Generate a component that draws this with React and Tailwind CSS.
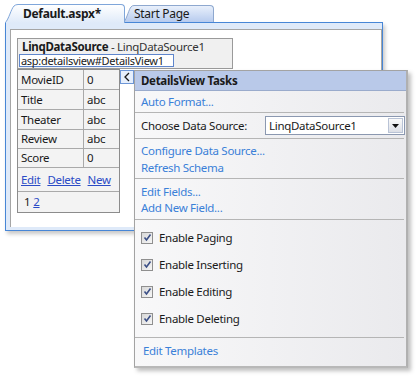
import React from 'react';

const Tab = ({ active, label }) => {
  const id = active ? 'tabA' : 'tabB';
  const h = active ? 19 : 17;
  const top = active ? '#ffffff' : '#e9f0fb';
  const bottom = active ? '#dfeaf9' : '#b7cbee';
  const stroke = active ? '#7fa6da' : '#8ea8cf';
  return (
    <div className={active ? 'flex items-end relative z-10 mb-[-1px]' : 'flex items-end ml-[-1px]'}>
      <svg width={active ? 13 : 10} height={h} viewBox={`0 0 ${active ? 13 : 10} ${h}`} className="block">
        <defs>
          <linearGradient id={id} x1="0" y1="0" x2="0" y2="1">
            <stop offset="0" stopColor={top} />
            <stop offset="1" stopColor={bottom} />
          </linearGradient>
        </defs>
        {active ? (
          <>
            <path d="M0,19 C4,15 6,5 9,2 Q10.5,0.5 13,0.5 L13,19 Z" fill={`url(#${id})`} />
            <path d="M0,19 C4,15 6,5 9,2 Q10.5,0.5 13,0.5" fill="none" stroke={stroke} />
          </>
        ) : (
          <>
            <path d="M0,17 C3,13 5,4 7,2 Q8,0.5 10,0.5 L10,17 Z" fill={`url(#${id})`} />
            <path d="M0,17 C3,13 5,4 7,2 Q8,0.5 10,0.5" fill="none" stroke={stroke} />
          </>
        )}
      </svg>
      <div
        className={
          active
            ? 'h-[19px] w-[107px] border-t border-r border-[#7fa6da] rounded-tr-[4px] bg-linear-to-b from-white to-[#dfeaf9] pl-[5px] text-[12px] font-bold leading-[18px] text-[#1a1a1a]'
            : 'h-[17px] w-[80px] border-t border-r border-[#8ea8cf] rounded-tr-[4px] bg-linear-to-b from-[#e9f0fb] to-[#b7cbee] text-[12px] leading-[16px] text-[#1a1a1a]'
        }
      >
        {label}
      </div>
    </div>
  );
};

const fields = [
  ['MovieID', '0', 'h-[20px]'],
  ['Title', 'abc', 'h-[20px]'],
  ['Theater', 'abc', 'h-[20px]'],
  ['Review', 'abc', 'h-[19px]'],
  ['Score', '0', 'h-[19px]'],
];

const Check = () => (
  <span className="flex h-[12px] w-[12px] items-center justify-center border border-[#8f8f8f] bg-linear-to-br from-[#d8d8d8] to-[#f6f6f6]">
    <svg width="9" height="9" viewBox="0 0 9 9">
      <path d="M1.5,4.5 L3.5,7 L7.5,1.5" fill="none" stroke="#3b4f86" strokeWidth="1.6" />
    </svg>
  </span>
);

const Sep = () => <div className="h-px bg-[#b5b5b5] mr-[2px]" />;

const linkCls = 'text-[#3a80d8]';

export default function App() {
  const options = ['Enable Paging', 'Enable Inserting', 'Enable Editing', 'Enable Deleting'];
  return (
    <div className="relative w-[417px] h-[377px] overflow-hidden bg-white font-['Noto_Sans',sans-serif] tracking-[-0.3px] text-[#1a1a1a]">
      <div className="flex items-end h-[22px] pl-[5px]">
        <Tab active label="Default.aspx*" />
        <Tab label="Start Page" />
      </div>

      <div className="ml-[5px] w-[378px] h-[209px] border border-[#4786d6] bg-[#dfeaf9] pt-[6px] pl-[4px] pb-[3px] shadow-[2px_3px_4px_rgba(0,0,0,0.22)]">
        <div className="h-full bg-white border-t border-l border-r border-[#a5a5a5] pl-[6px] pt-[8px]">
          <div className="w-[216px] border border-[#9a9a9a] bg-[#f0f0f0] pl-[1px] pb-[1px]">
            <div className="ml-[3px] text-[11.5px] leading-[15px]">
              <span className="font-bold">LinqDataSource</span>
              <span className="text-[#333]"> - LinqDataSource1</span>
            </div>
            <div className="w-fit min-w-[155px] h-[13px] border border-[#5f86cc] bg-white pl-[1px] pr-[2px] text-[11px] leading-[11px] whitespace-nowrap">
              asp:detailsview#DetailsView1
            </div>
          </div>

          <div className="flex items-start">
            <div className="w-[103px] border border-[#8c8c8c] bg-[#f3f3f3] text-[11.5px]">
              {fields.map(([k, v, h]) => (
                <div key={k} className={`flex ${h} border-b border-[#a9a9a9] items-center`}>
                  <div className="w-[66px] h-full border-r border-[#a9a9a9] pl-[3px] flex items-center">{k}</div>
                  <div className="pl-[3px]">{v}</div>
                </div>
              ))}
              <div className="flex h-[24px] items-center gap-[7px] pl-[3px] border-b border-[#a9a9a9] text-[#2b4bc6]">
                <span className="underline">Edit</span>
                <span className="underline">Delete</span>
                <span className="underline">New</span>
              </div>
              <div className="flex h-[20px] items-center gap-[3px] pl-[6px]">
                <span>1</span>
                <span className="underline text-[#2b4bc6]">2</span>
              </div>
            </div>
            <div className="mt-px flex h-[14px] w-[14px] items-center justify-center border border-[#6d96d6] bg-[#e6effc]">
              <svg width="8" height="10" viewBox="0 0 8 10">
                <path d="M6,1 L2,5 L6,9" fill="none" stroke="#1a1a1a" strokeWidth="1.3" />
              </svg>
            </div>
          </div>
        </div>
      </div>

      <div className="absolute left-[134px] top-[70px] w-[274px] h-[298px] border border-[#a3a3a3] border-r-2 border-r-[#b0b0b0] border-b-2 border-b-[#b8b8b8] bg-linear-to-r from-[#f8f8f9] to-[#eaeaed] shadow-[3px_3px_4px_rgba(0,0,0,0.25)] text-[11.5px]">
        <div className="h-[20px] bg-[#b9c9e9] border-b border-[#9aabcc] pl-[6px] font-bold leading-[19px]">
          DetailsView Tasks
        </div>
        <div className={`h-[21px] flex items-center px-[6px] ${linkCls}`}>Auto Format...</div>
        <Sep />
        <div className="h-[25px] flex items-center justify-between pl-[6px] pr-px">
          <span>Choose Data Source:</span>
          <div className="flex h-[19px] w-[140px] border border-[#8b98b0] bg-white">
            <span className="flex-1 pl-[3px] leading-[17px]">LinqDataSource1</span>
            <div className="m-px w-[15px] flex items-center justify-center border border-[#b9c3d6] bg-linear-to-b from-[#fafafa] to-[#dcdfe6]">
              <svg width="7" height="4" viewBox="0 0 7 4">
                <path d="M0,0 L7,0 L3.5,4 Z" fill="#111" />
              </svg>
            </div>
          </div>
        </div>
        <Sep />
        <div className={`pt-[3px] pb-[2px] px-[6px] ${linkCls}`}>
          <div className="h-[17px] flex items-center">Configure Data Source...</div>
          <div className="h-[17px] flex items-center">Refresh Schema</div>
        </div>
        <Sep />
        <div className={`pt-[5px] pb-[3px] px-[6px] ${linkCls}`}>
          <div className="h-[16px] flex items-center">Edit Fields...</div>
          <div className="h-[16px] flex items-center">Add New Field...</div>
        </div>
        <Sep />
        <div className="pt-[4px] pb-[5px] px-[6px]">
          {options.map((o) => (
            <div key={o} className="h-[27px] flex items-center gap-[6px]">
              <Check />
              <span>{o}</span>
            </div>
          ))}
        </div>
        <Sep />
        <div className={`h-[26px] flex items-center px-[8px] ${linkCls}`}>Edit Templates</div>
      </div>
    </div>
  );
}
